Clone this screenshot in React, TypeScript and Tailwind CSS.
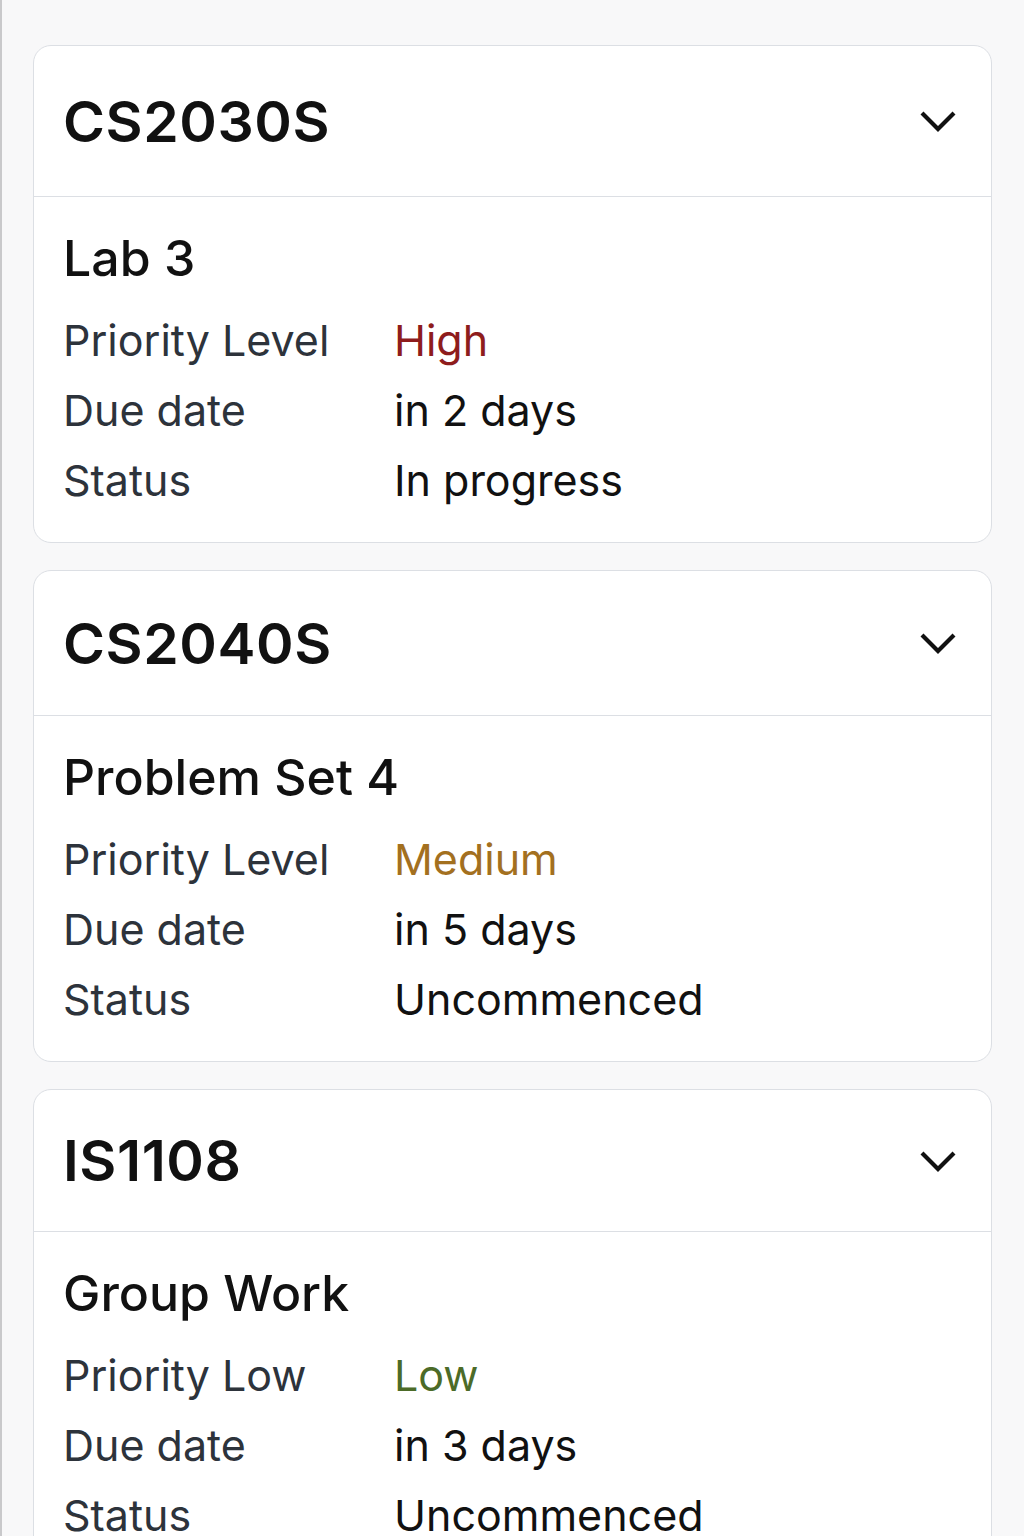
import React from 'react'

type Task = {
  course: string
  title: string
  priorityLabel: string
  priority: string
  priorityClass: string
  headerClass: string
  due: string
  status: string
}

const tasks: Task[] = [
  { course: 'CS2030S', title: 'Lab 3', priorityLabel: 'Priority Level', priority: 'High', priorityClass: 'text-[#8e1c1c]', headerClass: 'h-[151px]', due: 'in 2 days', status: 'In progress' },
  { course: 'CS2040S', title: 'Problem Set 4', priorityLabel: 'Priority Level', priority: 'Medium', priorityClass: 'text-[#a3701f]', headerClass: 'h-[145px]', due: 'in 5 days', status: 'Uncommenced' },
  { course: 'IS1108', title: 'Group Work', priorityLabel: 'Priority Low', priority: 'Low', priorityClass: 'text-[#4c6b28]', headerClass: 'h-[142px]', due: 'in 3 days', status: 'Uncommenced' },
]

function Chevron() {
  return (
    <svg width="40" height="28" viewBox="0 0 40 28" fill="none" className="shrink-0">
      <polyline points="4,6 20,22 36,6" stroke="#111" strokeWidth="4.2" strokeLinejoin="miter" strokeLinecap="butt" />
    </svg>
  )
}

function TaskCard({ t }: { t: Task }) {
  return (
    <div className="bg-white border border-[#dcdfe4] rounded-[18px] overflow-hidden">
      {/* header */}
      <div className={`${t.headerClass} flex items-center justify-between pl-[29px] pr-[33px] border-b border-[#dcdfe4]`}>
        <h2 className="text-[57px] leading-none font-semibold text-[#111] tracking-[0.01em]">{t.course}</h2>
        <Chevron />
      </div>
      {/* body */}
      <div className="px-[29px] pt-[31px] pb-[27px]">
        <h3 className="text-[50px] leading-[60px] font-medium text-[#111] mb-[17px]">{t.title}</h3>
        <div className="grid grid-cols-[331px_1fr] text-[43px] leading-[70px]">
          <span className="text-[#2d333b]">{t.priorityLabel}</span>
          <span className={t.priorityClass}>{t.priority}</span>
          <span className="text-[#2d333b]">Due date</span>
          <span className="text-[#111]">{t.due}</span>
          <span className="text-[#2d333b]">Status</span>
          <span className="text-[#111]">{t.status}</span>
        </div>
      </div>
    </div>
  )
}

export default function App() {
  return (
    <div
      className="min-h-[1536px] bg-[#f8f8f9] border-l-2 border-[#c9c9cb] pl-[31px] pr-[32px] pt-[45px] flex flex-col gap-[27px]"
      style={{ fontFamily: 'Inter, "Noto Sans", sans-serif' }}
    >
      {tasks.map((t) => (
        <TaskCard key={t.course} t={t} />
      ))}
    </div>
  )
}
